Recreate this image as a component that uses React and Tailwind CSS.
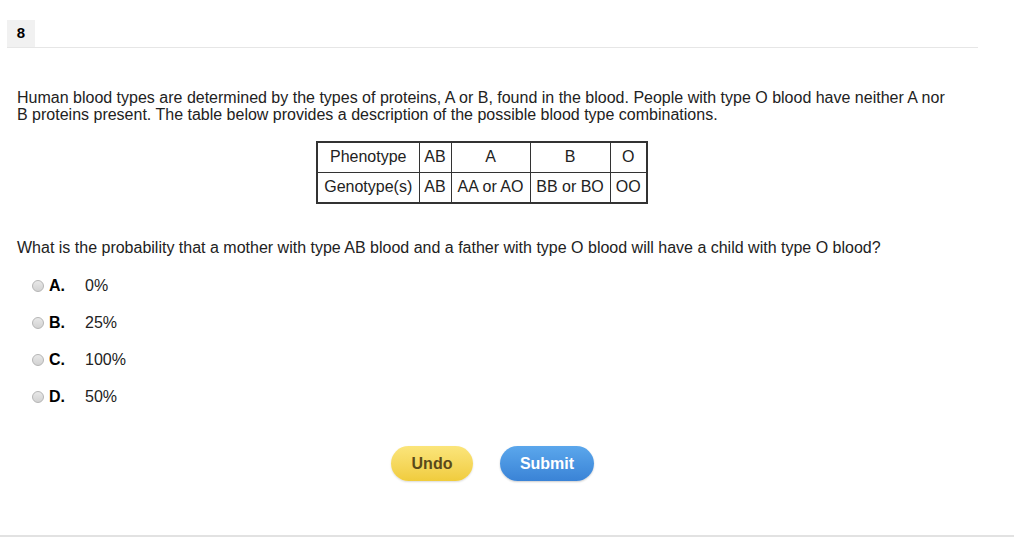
import React, { useState } from 'react';

const options = [
  { letter: 'A.', value: '0%' },
  { letter: 'B.', value: '25%' },
  { letter: 'C.', value: '100%' },
  { letter: 'D.', value: '50%' },
];

const cell = 'border border-[#333] p-0 h-[30px] text-center font-normal';

const App = () => {
  const [picked, setPicked] = useState(null);

  return (
    <div className="w-[1014px] h-[537px] bg-white text-[16px] text-[#222] overflow-hidden flex flex-col" style={{ fontFamily: '"Liberation Sans", Arial, sans-serif' }}>
      <div className="pt-[20px] pl-[7px] w-[978px]">
        <div className="border-b border-[#e6e6e6] flex">
          <div className="w-[28px] h-[27px] bg-[#f1f1f1] flex items-center justify-center font-bold text-[15px] text-black">8</div>
        </div>
      </div>

      <div className="pl-[17px] pr-[60px] pt-[41px] flex-1">
        <p className="leading-[17px]">
          Human blood types are determined by the types of proteins, A or B, found in the blood. People with type O blood have neither A nor B proteins present. The table below provides a description of the possible blood type combinations.
        </p>

        <div className="flex mt-[18px] pl-[299px]">
          <table className="border-collapse border-2 border-[#333] table-fixed">
            <tbody>
              <tr>
                <td className={`${cell} w-[102px]`}>Phenotype</td>
                <td className={`${cell} w-[32px]`}>AB</td>
                <td className={`${cell} w-[79px]`}>A</td>
                <td className={`${cell} w-[80px]`}>B</td>
                <td className={`${cell} w-[37px]`}>O</td>
              </tr>
              <tr>
                <td className={`${cell} h-[31px]`}>Genotype(s)</td>
                <td className={cell}>AB</td>
                <td className={cell}>AA or AO</td>
                <td className={cell}>BB or BO</td>
                <td className={cell}>OO</td>
              </tr>
            </tbody>
          </table>
        </div>

        <p className="mt-[35px] leading-[18px]">
          What is the probability that a mother with type AB blood and a father with type O blood will have a child with type O blood?
        </p>

        <div className="mt-[20px] pl-[15px] flex flex-col gap-[19px]">
          {options.map((o, i) => (
            <label key={o.letter} className="flex items-center h-[18px] cursor-pointer" onClick={() => setPicked(i)}>
              <span className="w-[12px] h-[12px] rounded-full border border-[#b5b5b5] bg-gradient-to-b from-[#e8e8e8] to-[#d2d2d2] flex items-center justify-center">
                {picked === i && <span className="w-[6px] h-[6px] rounded-full bg-[#444]" />}
              </span>
              <span className="ml-[5px] w-[36px] font-bold text-black">{o.letter}</span>
              <span>{o.value}</span>
            </label>
          ))}
        </div>

        <div className="flex justify-center gap-[27px] mt-[40px] pl-[14px]">
          <button className="w-[82px] h-[35px] rounded-full bg-gradient-to-b from-[#fbe57a] to-[#f0cc3c] text-[#5a4a1a] font-bold text-[16px] shadow-[0_1px_2px_rgba(0,0,0,0.15)]">
            Undo
          </button>
          <button className="w-[94px] h-[35px] rounded-full bg-gradient-to-b from-[#5ba7ec] to-[#3a83d6] text-white font-bold text-[16px] shadow-[0_1px_2px_rgba(0,0,0,0.2)]">
            Submit
          </button>
        </div>
      </div>

      <div className="h-[2px] bg-[#e2e2e2]" />
    </div>
  );
};

export default App;
